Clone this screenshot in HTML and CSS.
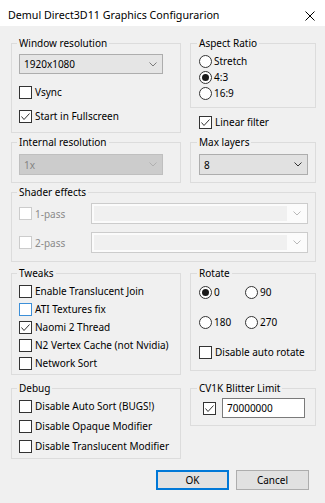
FILE: index.html
```html
<!DOCTYPE html>
<html lang="en">
<head>
  <meta charset="UTF-8" />
  <meta name="viewport" content="width=device-width, initial-scale=1.0"/>
  <title>Demul Direct3D11 Graphics Configurarion</title>
  <link rel="stylesheet" href="styles.css">
</head>
<body>
  <div class="window">
    <div class="titlebar">
      <span class="title">Demul Direct3D11 Graphics Configurarion</span>
      <svg class="close" width="10" height="10" viewBox="0 0 10 10"><path d="M0.5 0.5 L9.5 9.5 M9.5 0.5 L0.5 9.5"/></svg>
    </div>

    <div class="content">
      <!-- resolution / aspect -->
      <div class="row">
        <fieldset class="group left res">
          <legend>Window resolution</legend>
          <div class="combo"><span>1920x1080</span><svg class="arrow light" width="8" height="5" viewBox="0 0 8 5"><polyline points="0.5,0.5 4,4 7.5,0.5"/></svg></div>
          <label class="check tall"><span class="box"></span>Vsync</label>
          <label class="check tall"><span class="box"><svg width="11" height="11" viewBox="0 0 11 11"><polyline points="1.5,5.5 4,8.5 9.5,2.5"/></svg></span>Start in Fullscreen</label>
        </fieldset>
        <div class="side">
          <fieldset class="group right aspect">
            <legend>Aspect Ratio</legend>
            <label class="radio"><span class="dot"></span>Stretch</label>
            <label class="radio"><span class="dot on"></span>4:3</label>
            <label class="radio"><span class="dot"></span>16:9</label>
          </fieldset>
          <label class="check linear"><span class="box"><svg width="11" height="11" viewBox="0 0 11 11"><polyline points="1.5,5.5 4,8.5 9.5,2.5"/></svg></span>Linear filter</label>
        </div>
      </div>

      <!-- internal res / layers -->
      <div class="row gap2">
        <fieldset class="group left pick">
          <legend>Internal resolution</legend>
          <div class="combo off"><span>1x</span><svg class="arrow" width="8" height="5" viewBox="0 0 8 5"><polyline points="0.5,0.5 4,4 7.5,0.5"/></svg></div>
        </fieldset>
        <fieldset class="group right pick">
          <legend>Max layers</legend>
          <div class="combo full"><span>8</span><svg class="arrow" width="8" height="5" viewBox="0 0 8 5"><polyline points="0.5,0.5 4,4 7.5,0.5"/></svg></div>
        </fieldset>
      </div>

      <!-- shaders -->
      <fieldset class="group shader">
        <legend>Shader effects</legend>
        <div class="shader-row">
          <label class="check dim"><span class="box"></span>1-pass</label>
          <div class="edit-combo"><span class="field"></span><svg class="arrow" width="8" height="5" viewBox="0 0 8 5"><polyline points="0.5,0.5 4,4 7.5,0.5"/></svg></div>
        </div>
        <div class="shader-row second">
          <label class="check dim"><span class="box"></span>2-pass</label>
          <div class="edit-combo"><span class="field"></span><svg class="arrow" width="8" height="5" viewBox="0 0 8 5"><polyline points="0.5,0.5 4,4 7.5,0.5"/></svg></div>
        </div>
      </fieldset>

      <!-- tweaks / rotate -->
      <div class="row gap4">
        <fieldset class="group left tweaks">
          <legend>Tweaks</legend>
          <label class="check"><span class="box"></span>Enable Translucent Join</label>
          <label class="check"><span class="box focus"></span>ATI Textures fix</label>
          <label class="check"><span class="box"><svg width="11" height="11" viewBox="0 0 11 11"><polyline points="1.5,5.5 4,8.5 9.5,2.5"/></svg></span>Naomi 2 Thread</label>
          <label class="check"><span class="box"></span>N2 Vertex Cache (not Nvidia)</label>
          <label class="check"><span class="box"></span>Network Sort</label>
        </fieldset>
        <fieldset class="group right rotate">
          <legend>Rotate</legend>
          <div class="rot-row">
            <label class="radio"><span class="dot on"></span>0</label>
            <label class="radio"><span class="dot"></span>90</label>
          </div>
          <div class="rot-row">
            <label class="radio"><span class="dot"></span>180</label>
            <label class="radio"><span class="dot"></span>270</label>
          </div>
          <label class="check rot-row"><span class="box"></span>Disable auto rotate</label>
        </fieldset>
      </div>

      <!-- debug / cv1k -->
      <div class="row gap6">
        <fieldset class="group left debug">
          <legend>Debug</legend>
          <label class="check"><span class="box"></span>Disable Auto Sort (BUGS!)</label>
          <label class="check"><span class="box"></span>Disable Opaque Modifier</label>
          <label class="check"><span class="box"></span>Disable Translucent Modifier</label>
        </fieldset>
        <fieldset class="group right blitter">
          <legend>CV1K Blitter Limit</legend>
          <div class="blit-row">
            <span class="box"><svg width="11" height="11" viewBox="0 0 11 11"><polyline points="1.5,5.5 4,8.5 9.5,2.5"/></svg></span>
            <input class="limit" type="text" value="70000000" />
          </div>
        </fieldset>
      </div>

      <div class="buttons">
        <button class="btn default">OK</button>
        <button class="btn">Cancel</button>
      </div>
    </div>
  </div>
</body>
</html>
```

FILE: styles.css
```css
body {
  margin: 0;
  background: #f0f0f0;
  font-family: "Noto Sans", sans-serif;
  font-size: 10px;
  color: #000;
}

.window {
  width: 325px;
  height: 503px;
  background: #f0f0f0;
  overflow: hidden;
}

.titlebar {
  height: 26px;
  background: #fff;
  display: flex;
  align-items: flex-start;
  justify-content: space-between;
  padding: 8px 10px 0 8px;
  box-sizing: border-box;
}

.title {
  font-size: 10.7px;
  line-height: 15px;
}

.close {
  stroke: #000;
  stroke-width: 1;
  fill: none;
  margin-top: 3px;
}

.content {
  padding: 10px 9px 0 11px;
}

.row {
  display: flex;
  gap: 9px;
  align-items: flex-start;
}

.gap2 { margin-top: 2px; }
.gap4 { margin-top: 4px; }
.gap6 { margin-top: 6px; }

/* group boxes */
.group {
  margin: 0;
  border: 1px solid #dcdcdc;
  padding: 0 7px;
  min-width: 0;
  box-sizing: border-box;
}

.group legend {
  padding: 0 2px;
  margin-left: -2px;
  line-height: 14px;
}

.left { width: 170px; }
.right { width: 126px; padding-left: 8px; }

.side { width: 126px; }
.side .right { width: 100%; }

.res { padding-top: 4px; padding-bottom: 4px; }
.aspect { padding-top: 3px; padding-bottom: 6px; }
.pick { padding-top: 5px; padding-bottom: 7px; }
.shader { margin-top: 2px; padding-top: 4px; padding-bottom: 8px; }
.tweaks { padding-top: 2px; padding-bottom: 2px; }
.rotate { padding-bottom: 6px; }
.debug { padding-top: 1px; padding-bottom: 2px; }
.blitter { padding-top: 3px; padding-bottom: 7px; }

/* checkboxes */
.check {
  display: flex;
  align-items: center;
  height: 18px;
  white-space: nowrap;
}

.check.tall { height: 24px; }
.debug .check { height: 20px; }

.box {
  width: 13px;
  height: 13px;
  flex: none;
  border: 1px solid #333;
  background: #fff;
  box-sizing: border-box;
  margin-right: 3px;
  display: flex;
  align-items: center;
  justify-content: center;
}

.box svg {
  fill: none;
  stroke: #333;
  stroke-width: 1;
}

.box.focus { border-color: #3c8fd8; }

.check.dim { color: #8a8a8a; }
.check.dim .box { border-color: #cccccc; }

.linear {
  margin-top: 6px;
  height: 16px;
  padding-left: 9px;
}

/* radios */
.radio {
  display: flex;
  align-items: center;
  height: 16px;
}

.dot {
  width: 13px;
  height: 13px;
  flex: none;
  border: 1px solid #333;
  border-radius: 50%;
  background: #fff;
  box-sizing: border-box;
  margin-right: 2px;
  display: flex;
  align-items: center;
  justify-content: center;
}

.dot.on::after {
  content: "";
  width: 7px;
  height: 7px;
  border-radius: 50%;
  background: #1a1a1a;
}

.rot-row {
  display: flex;
  align-items: center;
  height: 24px;
}

.rot-row + .rot-row { margin-top: 6px; }

.rot-row .radio:first-child { width: 46px; }

/* combo boxes */
.combo {
  width: 144px;
  height: 20px;
  margin-bottom: 6px;
  border: 1px solid #adadad;
  background: #e5e5e5;
  box-sizing: border-box;
  display: flex;
  align-items: center;
  justify-content: space-between;
  padding: 0 5px 0 4px;
}

.pick .combo { height: 21px; margin-bottom: 0; }
.combo.full { width: 109px; background: #e1e1e1; }

.combo.off {
  background: #cccccc;
  border-color: #bfbfbf;
  color: #838383;
}

.arrow {
  fill: none;
  stroke: #333;
  stroke-width: 1;
}

.arrow.light { stroke: #7a7a7a; }
.combo.off .arrow { stroke: #b0b0b0; }

.shader-row {
  display: flex;
  align-items: center;
  height: 21px;
}

.shader-row.second { margin-top: 8px; }

.shader-row .check { width: 72px; }

.edit-combo {
  flex: 1;
  height: 21px;
  border: 1px solid #cccccc;
  background: #fbfbfb;
  box-sizing: border-box;
  display: flex;
  align-items: center;
  padding: 2px 6px 2px 2px;
}

.edit-combo .field {
  flex: 1;
  align-self: stretch;
  background: #f0f0f0;
  margin-right: 6px;
}

.edit-combo .arrow { stroke: #b8b8b8; }

/* cv1k */
.blit-row {
  display: flex;
  align-items: center;
  height: 20px;
}

.blit-row .box {
  margin-left: 4px;
  margin-right: 6px;
}

.limit {
  width: 83px;
  height: 20px;
  box-sizing: border-box;
  border: 1px solid #7a7a7a;
  background: #fff;
  padding: 0 4px;
  font: inherit;
  color: #000;
  outline: none;
}

/* dialog buttons */
.buttons {
  display: flex;
  justify-content: flex-end;
  gap: 7px;
  margin-top: 11px;
  padding-right: 7px;
}

.btn {
  width: 73px;
  height: 20px;
  padding: 0;
  border: 1px solid #adadad;
  background: #e1e1e1;
  font: inherit;
  color: #000;
}

.btn.default {
  border: 2px solid #0078d7;
}
```
